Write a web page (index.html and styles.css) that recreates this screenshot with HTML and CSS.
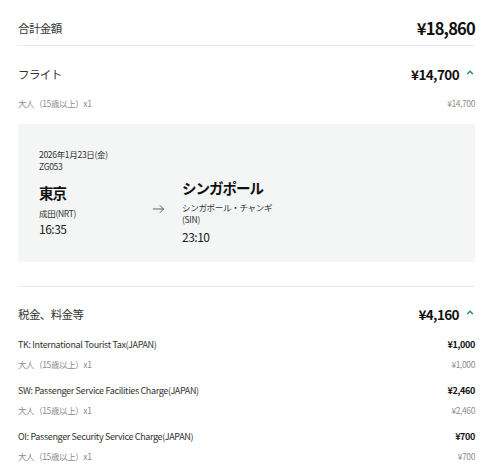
FILE: index.html
```html
<!DOCTYPE html>
<html lang="ja">
<head>
<meta charset="utf-8">
<link rel="stylesheet" href="styles.css">
</head>
<body>
<div class="summary">
  <div class="total">
    <span class="total-label">合計金額</span>
    <span class="total-amount">¥18,860</span>
  </div>

  <section class="group">
    <div class="group-head">
      <span class="group-title">フライト</span>
      <span class="group-amount">¥14,700<svg class="chev" viewBox="0 0 10 6" width="8" height="5"><path d="M1.5 5 L5 1.5 L8.5 5" fill="none" stroke="#1a8a6e" stroke-width="1.7"/></svg></span>
    </div>
    <div class="sub-row">
      <span>大人（15歳以上）x1</span>
      <span>¥14,700</span>
    </div>
    <div class="flight">
      <div class="flight-date">2026年1月23日(金)</div>
      <div class="flight-no">ZG053</div>
      <div class="route">
        <div class="stop from">
          <div class="city">東京</div>
          <div class="airport">成田(NRT)</div>
          <div class="time">16:35</div>
        </div>
        <div class="arrow">
          <svg viewBox="0 0 14 10" width="13" height="10"><path d="M1 5 H12.5 M8.5 1 L12.5 5 L8.5 9" fill="none" stroke="#555" stroke-width="1"/></svg>
        </div>
        <div class="stop to">
          <div class="city">シンガポール</div>
          <div class="airport">シンガポール・チャンギ<br>(SIN)</div>
          <div class="time">23:10</div>
        </div>
      </div>
    </div>
  </section>

  <section class="group taxes">
    <div class="group-head">
      <span class="group-title">税金、料金等</span>
      <span class="group-amount">¥4,160<svg class="chev" viewBox="0 0 10 6" width="8" height="5"><path d="M1.5 5 L5 1.5 L8.5 5" fill="none" stroke="#1a8a6e" stroke-width="1.7"/></svg></span>
    </div>
    <div class="tax">
      <div class="tax-row"><span>TK: International Tourist Tax(JAPAN)</span><strong>¥1,000</strong></div>
      <div class="sub-row"><span>大人（15歳以上）x1</span><span>¥1,000</span></div>
    </div>
    <div class="tax">
      <div class="tax-row"><span>SW: Passenger Service Facilities Charge(JAPAN)</span><strong>¥2,460</strong></div>
      <div class="sub-row"><span>大人（15歳以上）x1</span><span>¥2,460</span></div>
    </div>
    <div class="tax">
      <div class="tax-row"><span>OI: Passenger Security Service Charge(JAPAN)</span><strong>¥700</strong></div>
      <div class="sub-row"><span>大人（15歳以上）x1</span><span>¥700</span></div>
    </div>
  </section>
</div>
</body>
</html>
```
FILE: styles.css
```css
* { box-sizing: border-box; }
html, body { margin: 0; padding: 0; background: #fff; }
body {
  font-family: "Noto Sans CJK JP", "Noto Sans", sans-serif;
  color: #222;
}
.summary {
  padding: 0 25px 0 18px;
}

/* grand total */
.total {
  display: flex;
  justify-content: space-between;
  align-items: center;
  height: 46px;
  padding: 11px 0 0;
  border-bottom: 1px solid #e8eceb;
}
.total-label { font-size: 11.5px; letter-spacing: -0.6px; color: #333; line-height: 34px; }
.total-amount { font-size: 16.5px; letter-spacing: -0.8px; font-weight: 700; color: #111; line-height: 34px; }

/* section heading with amount + collapse chevron */
.group-head {
  display: flex;
  justify-content: space-between;
  align-items: center;
  padding-top: 12px;
  height: 44px;
}
.group-title { font-size: 11.5px; letter-spacing: -0.6px; color: #333; line-height: 32px; }
.group-amount {
  font-size: 13.5px;
  letter-spacing: -0.6px;
  font-weight: 700;
  color: #111;
  display: flex;
  align-items: center;
  gap: 7px;
  line-height: 32px;
}
.chev { display: block; margin-top: -3px; margin-right: 1px; }

.sub-row {
  display: flex;
  justify-content: space-between;
  align-items: center;
  font-size: 8.5px;
  letter-spacing: -0.4px;
  color: #8d8d8d;
  height: 26px;
}

/* flight detail card */
.flight {
  background: #f4f6f5;
  margin-top: 8px;
  height: 138px;
  padding: 24px 0 0 21px;
  font-size: 8.5px;
  letter-spacing: -0.3px;
  color: #333;
}
.flight-date, .flight-no { line-height: 12px; }
.route {
  display: flex;
  align-items: flex-start;
  margin-top: 6px;
}
.city { font-size: 14.5px; letter-spacing: -1px; font-weight: 700; color: #111; line-height: 20px; }
.airport { line-height: 12px; }
.time { font-size: 12px; letter-spacing: -0.5px; line-height: 16px; color: #222; }

.from { width: 113px; margin-top: 5px; }
.from .airport { margin-top: 4px; }
.from .time { margin-top: 2px; }

.to .airport { margin-top: 3px; }
.to .time { margin-top: 4px; }

.arrow { width: 30px; padding-top: 26px; }
.arrow svg { display: block; }

/* taxes and fees */
.taxes {
  margin-top: 24px;
  border-top: 1px solid #e8eceb;
}
.taxes .group-head { padding: 11px 0 4px; height: 47px; }
.tax { padding-bottom: 6px; }
.tax-row {
  display: flex;
  justify-content: space-between;
  align-items: center;
  height: 20px;
  font-size: 9px;
  letter-spacing: -0.35px;
  color: #333;
}
.tax-row strong { font-weight: 700; color: #111; }
.tax .sub-row { height: 20px; }
```
